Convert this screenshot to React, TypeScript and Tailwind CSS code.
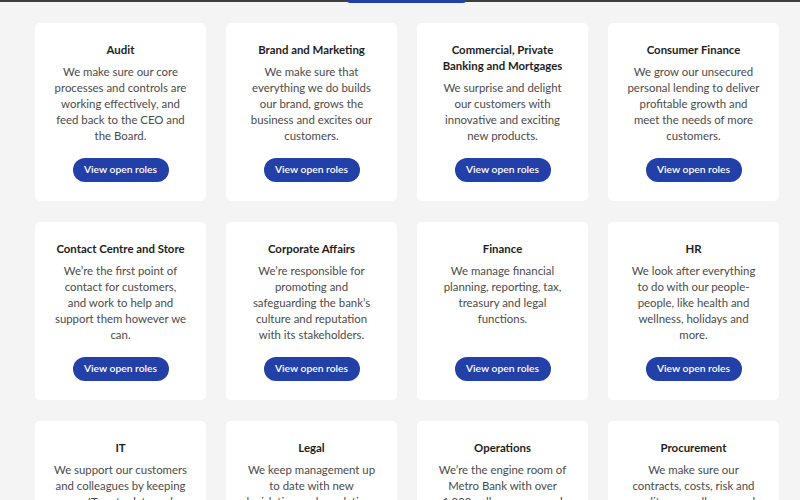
import React from "react";

const cards: { title: string[]; text: string[] }[] = [
  { title: ["Audit"], text: ["We make sure our core", "processes and controls are", "working effectively, and", "feed back to the CEO and", "the Board."] },
  { title: ["Brand and Marketing"], text: ["We make sure that", "everything we do builds", "our brand, grows the", "business and excites our", "customers."] },
  { title: ["Commercial, Private", "Banking and Mortgages"], text: ["We surprise and delight", "our customers with", "innovative and exciting", "new products."] },
  { title: ["Consumer Finance"], text: ["We grow our unsecured", "personal lending to deliver", "profitable growth and", "meet the needs of more", "customers."] },
  { title: ["Contact Centre and Store"], text: ["We\u2019re the first point of", "contact for customers,", "and work to help and", "support them however we", "can."] },
  { title: ["Corporate Affairs"], text: ["We\u2019re responsible for", "promoting and", "safeguarding the bank\u2019s", "culture and reputation", "with its stakeholders."] },
  { title: ["Finance"], text: ["We manage financial", "planning, reporting, tax,", "treasury and legal", "functions."] },
  { title: ["HR"], text: ["We look after everything", "to do with our people-", "people, like health and", "wellness, holidays and", "more."] },
  { title: ["IT"], text: ["We support our customers", "and colleagues by keeping", "our IT up to date and", "working well for everyone."] },
  { title: ["Legal"], text: ["We keep management up", "to date with new", "legislation and regulations", "that affect the bank."] },
  { title: ["Operations"], text: ["We\u2019re the engine room of", "Metro Bank with over", "1,000 colleagues spread", "across the country."] },
  { title: ["Procurement"], text: ["We make sure our", "contracts, costs, risk and", "quality are well managed", "across the bank."] },
];

function Card({ title, text }: { title: string[]; text: string[] }) {
  return (
    <div className="flex flex-col items-center rounded-[5px] bg-white px-[10px] pt-[19px] pb-[19px] text-center">
      <h3 className="flex flex-col items-center text-[11.4px] font-bold leading-[16px] text-[#1e1e1e]">
        {title.map((t) => (
          <span key={t} className="whitespace-nowrap">{t}</span>
        ))}
      </h3>
      <p className="mt-[6px] flex flex-col items-center text-[11.4px] leading-[16px] text-[#4b4b4b]">
        {text.map((t) => (
          <span key={t} className="whitespace-nowrap">{t}</span>
        ))}
      </p>
      <div className="mt-auto flex pt-[14px]">
        <button className="flex h-[24px] w-[96px] items-center justify-center rounded-full bg-[#2340a8] text-[10.3px] font-semibold text-white">
          View open roles
        </button>
      </div>
    </div>
  );
}

export default function App() {
  return (
    <div className="h-[500px] w-[800px] overflow-hidden bg-[#f4f4f4]" style={{ fontFamily: "Lato, 'Open Sans', sans-serif" }}>
      <div className="relative h-[2px] w-full bg-[#3e3e3e]">
        <div className="absolute left-[347px] top-0 h-[3px] w-[119px] rounded-b-[3px] bg-[#2340a8]" />
      </div>
      <div className="grid grid-cols-[repeat(4,171px)] gap-x-[20px] gap-y-[21px] pl-[35px] pt-[21px]">
        {cards.map((c) => (
          <Card key={c.title.join(" ")} {...c} />
        ))}
      </div>
    </div>
  );
}
